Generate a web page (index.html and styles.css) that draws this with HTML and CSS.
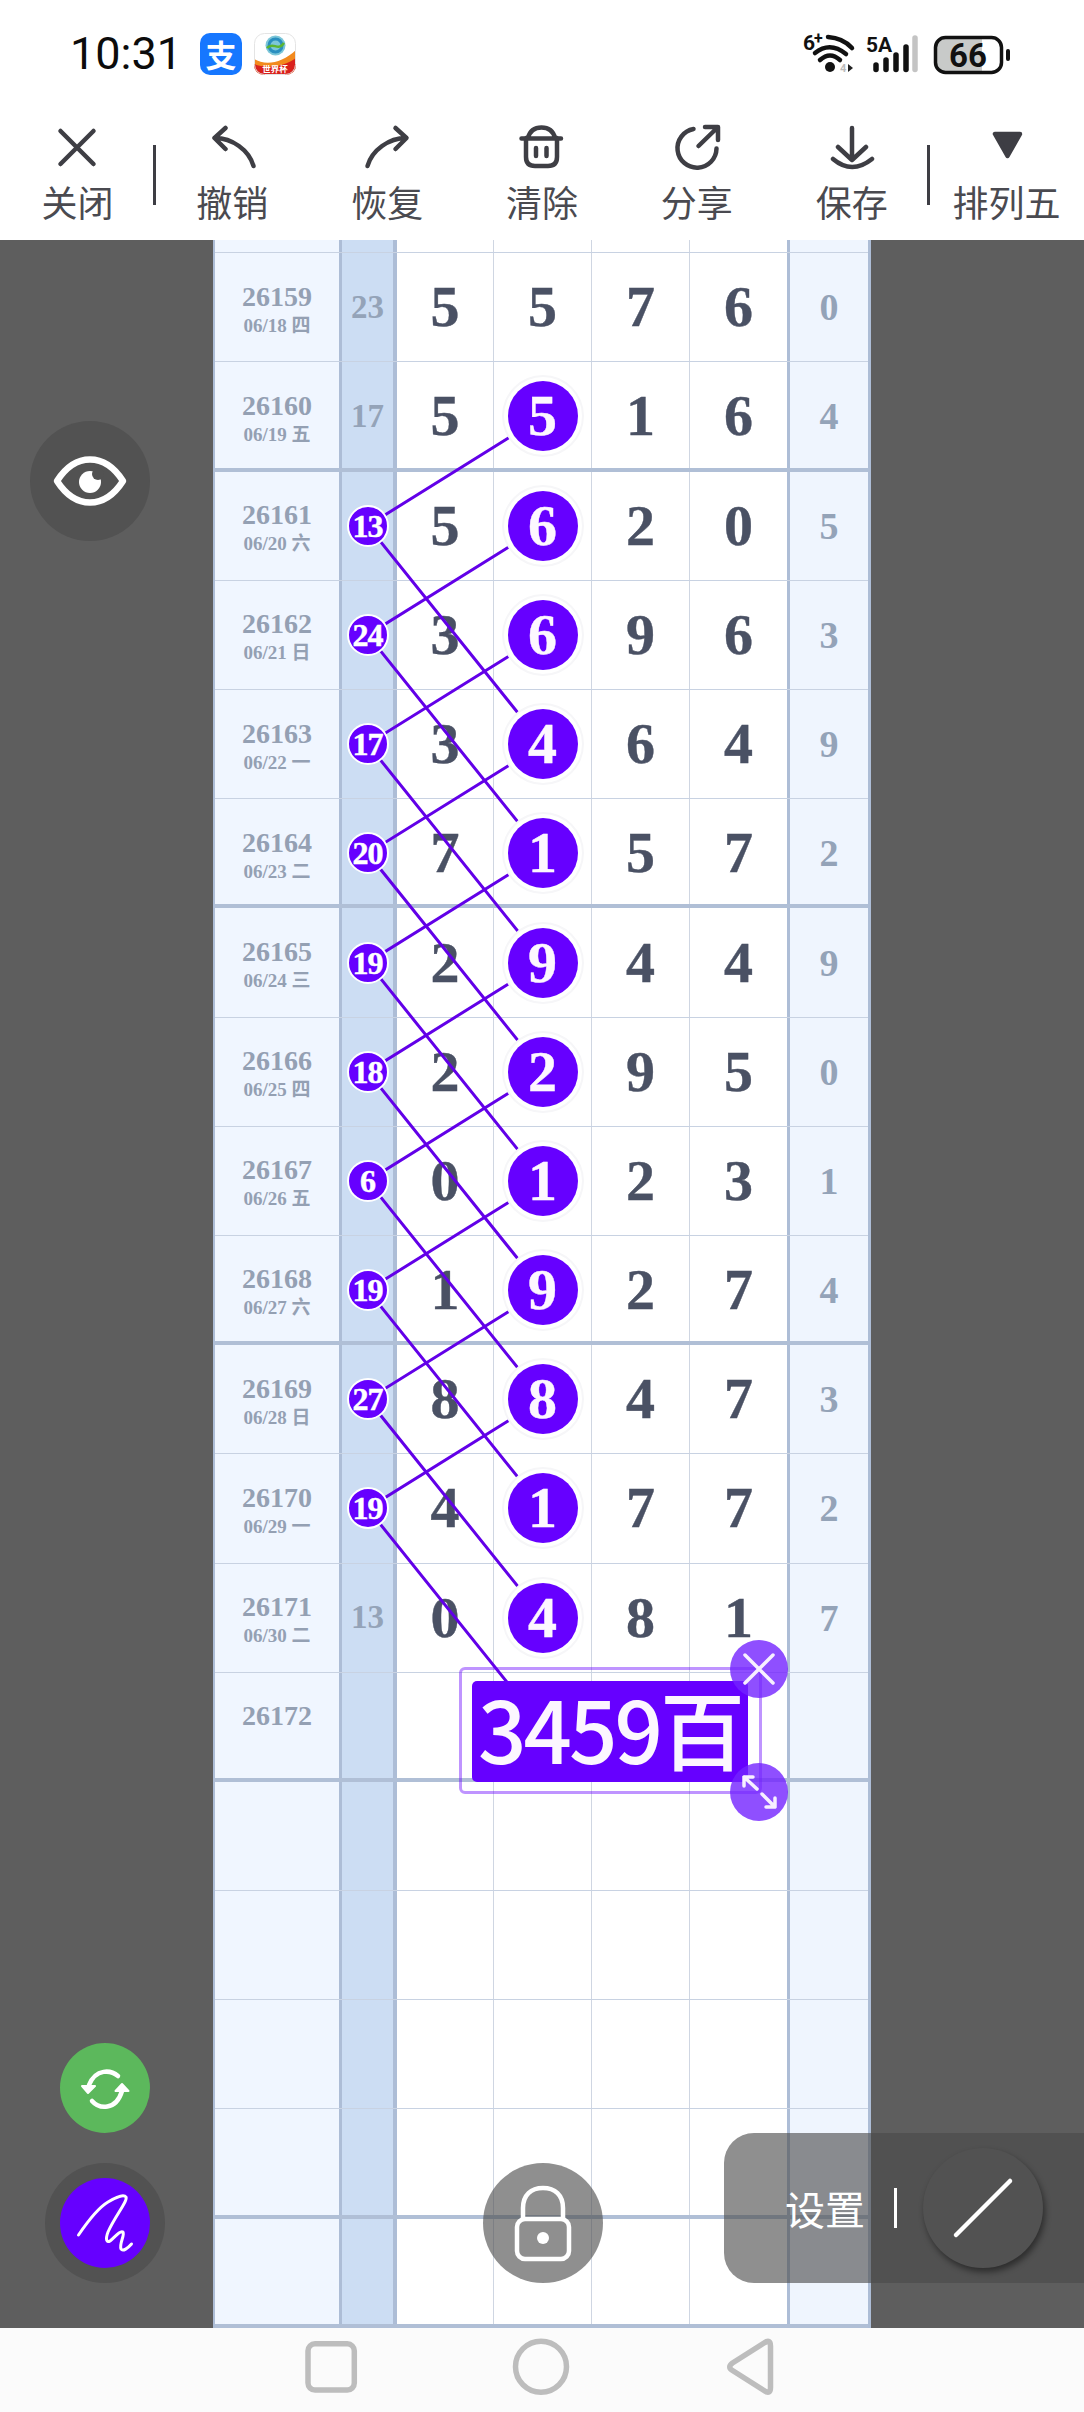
FILE: index.html
```html
<!DOCTYPE html>
<html lang="zh-CN">
<head>
    <meta charset="UTF-8">
    <meta name="viewport" content="width=device-width, initial-scale=1.0">
    <title>排列五 走势图</title>
    <link rel="stylesheet" href="styles.css">
</head>
<body>
    <div class="status-bar">
        <span class="time">10:31</span>
        <span class="app-icon alipay">支</span>
        <svg class="app-icon" viewBox="0 0 42 42">
            <defs><clipPath id="roundIcon"><rect width="42" height="42" rx="10"/></clipPath></defs>
            <g clip-path="url(#roundIcon)">
                <rect width="42" height="42" fill="#fff"/>
                <path d="M0 26 C12 33 28 30 42 17 V42 H0 Z" fill="#f28a1e"/>
                <path d="M0 31 C12 36 30 34 42 25 V42 H0 Z" fill="#d9211c"/>
                <circle cx="21.5" cy="12.5" r="10" fill="#7cc6d8"/>
                <circle cx="21.5" cy="12.5" r="6.5" fill="none" stroke="#2a8fc0" stroke-width="3"/>
                <path d="M13 15 C19 8 24 19 30 10" fill="none" stroke="#5cb531" stroke-width="2.5"/>
                <text class="cup-text" x="21" y="39">世界杯</text>
            </g>
            <rect x="0.5" y="0.5" width="41" height="41" rx="10" fill="none" stroke="#e4e4e4"/>
        </svg>
        <svg class="status-icons" viewBox="800 29 212 50">
            <text class="net-text" x="803" y="50">6</text>
            <text class="net-plus" x="814" y="44">+</text>
            <circle cx="830" cy="67" r="5" fill="#111"/>
            <g class="wifi-arc">
                <path d="M820 60 Q830 51 840 60"/>
                <path d="M815 53 Q830 41 846 54"/>
                <path d="M828 37 Q843 38 852 48"/>
            </g>
            <text class="net-small" x="840" y="72">4</text>
            <path d="M848 64 V72 L853 68 Z" fill="#222"/>
            <text class="net-text" x="866" y="52">5A</text>
            <g class="bars">
                <path d="M876 65 V69.5"/>
                <path d="M886 60 V69.5"/>
                <path d="M896 55 V69.5"/>
                <path d="M906 47 V69.5"/>
                <path class="bar-off" d="M915 38 V69.5"/>
            </g>
            <path d="M946 37.5 H982 V72.5 H946 Q936 72.5 936 62 V48 Q936 37.5 946 37.5 Z" fill="#c8cac9"/>
            <rect x="935.5" y="37.5" width="66" height="35" rx="10" fill="none" stroke="#111" stroke-width="3.5"/>
            <text class="battery-text" x="968" y="67">66</text>
            <rect x="1006" y="49" width="4" height="12" rx="2" fill="#111"/>
        </svg>
    </div>

    <div class="toolbar">
        <div class="tool tool-split">
            <svg viewBox="0 0 48 48"><path d="M7.5 8 L40.5 41 M40.5 8 L7.5 41"/></svg>
            <span>关闭</span>
        </div>
        <div class="tool">
            <svg viewBox="0 0 48 48"><path d="M17.5 5 L6.5 15 L17.5 26 M7 15 C24 15 41 27 45.5 43"/></svg>
            <span>撤销</span>
        </div>
        <div class="tool">
            <svg viewBox="0 0 48 48"><path d="M32.5 5 L43.5 15 L32.5 26 M43 15 C26 15 9 27 4.5 43"/></svg>
            <span>恢复</span>
        </div>
        <div class="tool">
            <svg viewBox="0 0 48 48"><path d="M3.5 15.5 H43 M10 15 C12 7 17 4.5 23.5 4.5 C30 4.5 35 7 37 15 M8 15 V34 Q8 43 17 43 H30 Q39 43 39 34 V15 M18 25 V33 M28.5 25 V33"/></svg>
            <span>清除</span>
        </div>
        <div class="tool">
            <svg viewBox="0 0 48 48"><path d="M20.5 6 A19.5 19.5 0 1 0 43.5 25.5 M25.5 23 L44 5 M32 4 H45 V17"/></svg>
            <span>分享</span>
        </div>
        <div class="tool tool-split">
            <svg viewBox="0 0 48 48"><path d="M24 5 V37 M10 24 L24 37 L38 24 M5 36 Q24 52 44 36"/></svg>
            <span>保存</span>
        </div>
        <div class="tool">
            <svg viewBox="0 0 48 48"><path class="solid" d="M12 11 H37 L24.5 33 Z"/></svg>
            <span>排列五</span>
        </div>
    </div>

    <div class="stage">
        <div class="sheet">
            <div class="row row-top"><div class="c-num"></div><div class="c-sum"></div><div class="c-d"></div><div class="c-d"></div><div class="c-d"></div><div class="c-d"></div><div class="c-tail"></div></div>

            <div class="row"><div class="c-num"><b>26159</b><small>06/18 四</small></div><div class="c-sum">23</div><div class="c-d">5</div><div class="c-d">5</div><div class="c-d">7</div><div class="c-d">6</div><div class="c-tail">0</div></div>
            <div class="row row-major"><div class="c-num"><b>26160</b><small>06/19 五</small></div><div class="c-sum">17</div><div class="c-d">5</div><div class="c-d"><span class="ball">5</span></div><div class="c-d">1</div><div class="c-d">6</div><div class="c-tail">4</div></div>
            <div class="row"><div class="c-num"><b>26161</b><small>06/20 六</small></div><div class="c-sum"><span class="dot">13</span></div><div class="c-d">5</div><div class="c-d"><span class="ball">6</span></div><div class="c-d">2</div><div class="c-d">0</div><div class="c-tail">5</div></div>
            <div class="row"><div class="c-num"><b>26162</b><small>06/21 日</small></div><div class="c-sum"><span class="dot">24</span></div><div class="c-d">3</div><div class="c-d"><span class="ball">6</span></div><div class="c-d">9</div><div class="c-d">6</div><div class="c-tail">3</div></div>
            <div class="row"><div class="c-num"><b>26163</b><small>06/22 一</small></div><div class="c-sum"><span class="dot">17</span></div><div class="c-d">3</div><div class="c-d"><span class="ball">4</span></div><div class="c-d">6</div><div class="c-d">4</div><div class="c-tail">9</div></div>
            <div class="row row-major"><div class="c-num"><b>26164</b><small>06/23 二</small></div><div class="c-sum"><span class="dot">20</span></div><div class="c-d">7</div><div class="c-d"><span class="ball">1</span></div><div class="c-d">5</div><div class="c-d">7</div><div class="c-tail">2</div></div>
            <div class="row"><div class="c-num"><b>26165</b><small>06/24 三</small></div><div class="c-sum"><span class="dot">19</span></div><div class="c-d">2</div><div class="c-d"><span class="ball">9</span></div><div class="c-d">4</div><div class="c-d">4</div><div class="c-tail">9</div></div>
            <div class="row"><div class="c-num"><b>26166</b><small>06/25 四</small></div><div class="c-sum"><span class="dot">18</span></div><div class="c-d">2</div><div class="c-d"><span class="ball">2</span></div><div class="c-d">9</div><div class="c-d">5</div><div class="c-tail">0</div></div>
            <div class="row"><div class="c-num"><b>26167</b><small>06/26 五</small></div><div class="c-sum"><span class="dot">6</span></div><div class="c-d">0</div><div class="c-d"><span class="ball">1</span></div><div class="c-d">2</div><div class="c-d">3</div><div class="c-tail">1</div></div>
            <div class="row row-major"><div class="c-num"><b>26168</b><small>06/27 六</small></div><div class="c-sum"><span class="dot">19</span></div><div class="c-d">1</div><div class="c-d"><span class="ball">9</span></div><div class="c-d">2</div><div class="c-d">7</div><div class="c-tail">4</div></div>
            <div class="row"><div class="c-num"><b>26169</b><small>06/28 日</small></div><div class="c-sum"><span class="dot">27</span></div><div class="c-d">8</div><div class="c-d"><span class="ball">8</span></div><div class="c-d">4</div><div class="c-d">7</div><div class="c-tail">3</div></div>
            <div class="row"><div class="c-num"><b>26170</b><small>06/29 一</small></div><div class="c-sum"><span class="dot">19</span></div><div class="c-d">4</div><div class="c-d"><span class="ball">1</span></div><div class="c-d">7</div><div class="c-d">7</div><div class="c-tail">2</div></div>
            <div class="row"><div class="c-num"><b>26171</b><small>06/30 二</small></div><div class="c-sum">13</div><div class="c-d">0</div><div class="c-d"><span class="ball">4</span></div><div class="c-d">8</div><div class="c-d">1</div><div class="c-tail">7</div></div>
            <div class="row row-major"><div class="c-num"><b>26172</b><small>&nbsp;</small></div><div class="c-sum"></div><div class="c-d"></div><div class="c-d"></div><div class="c-d"></div><div class="c-d"></div><div class="c-tail"></div></div>

            <div class="row"><div class="c-num"></div><div class="c-sum"></div><div class="c-d"></div><div class="c-d"></div><div class="c-d"></div><div class="c-d"></div><div class="c-tail"></div></div>
            <div class="row"><div class="c-num"></div><div class="c-sum"></div><div class="c-d"></div><div class="c-d"></div><div class="c-d"></div><div class="c-d"></div><div class="c-tail"></div></div>
            <div class="row"><div class="c-num"></div><div class="c-sum"></div><div class="c-d"></div><div class="c-d"></div><div class="c-d"></div><div class="c-d"></div><div class="c-tail"></div></div>
            <div class="row row-major"><div class="c-num"></div><div class="c-sum"></div><div class="c-d"></div><div class="c-d"></div><div class="c-d"></div><div class="c-d"></div><div class="c-tail"></div></div>
            <div class="row row-major"><div class="c-num"></div><div class="c-sum"></div><div class="c-d"></div><div class="c-d"></div><div class="c-d"></div><div class="c-d"></div><div class="c-tail"></div></div>

            <!-- each sum links the digit one row above it and the digit two rows below it -->
            <svg class="links" viewBox="0 0 658 2088">
                <path d="M330 176.5 L154.7 285.7 L330 504.1"/>
                <path d="M330 285.7 L154.7 394.9 L330 613.3"/>
                <path d="M330 394.9 L154.7 504.1 L330 722.5"/>
                <path d="M330 504.1 L154.7 613.3 L330 831.7"/>
                <path d="M330 613.3 L154.7 722.5 L330 940.9"/>
                <path d="M330 722.5 L154.7 831.7 L330 1050.1"/>
                <path d="M330 831.7 L154.7 940.9 L330 1159.3"/>
                <path d="M330 940.9 L154.7 1050.1 L330 1268.5"/>
                <path d="M330 1050.1 L154.7 1159.3 L330 1377.7"/>
                <path d="M330 1159.3 L154.7 1268.5 L330 1486.9"/>
            </svg>

            <div class="note-frame">
                <div class="note">3459百</div>
                <span class="handle handle-close">
                    <svg viewBox="0 0 58 58"><path d="M15 15 L43 43 M43 15 L15 43"/></svg>
                </span>
                <span class="handle handle-size">
                    <svg viewBox="0 0 58 58"><path d="M14 14 L27 26 M14 14 V23 M14 14 H23 M32 31 L45 44 M45 44 V35 M45 44 H36"/></svg>
                </span>
            </div>
        </div>

        <div class="float-btn eye-btn">
            <svg viewBox="0 0 120 120">
                <path class="eye-line" d="M27 60 C36 46 47 38.5 60 38.5 C73 38.5 84 46 93 60 C84 74 73 81.5 60 81.5 C47 81.5 36 74 27 60 Z"/>
                <circle cx="60" cy="61" r="11" fill="#fff"/>
                <circle cx="68" cy="53" r="6" fill="#525252"/>
            </svg>
        </div>

        <div class="float-btn sync-btn">
            <svg viewBox="0 0 90 90">
                <path class="sync-line" d="M58 33 C51 27 36 25 29 42"/>
                <path class="sync-head" d="M22 43 H35 L28 50 Z"/>
                <path class="sync-line" d="M32 58 C39 66 56 68 62 48"/>
                <path class="sync-head" d="M55.5 48 H68.5 L62 41 Z"/>
            </svg>
        </div>

        <div class="float-btn pen-btn">
            <span class="pen-face">
                <svg viewBox="0 0 90 90"><path d="M18.5 57 C28 43 38 30 48 24 C56 19 64 16 66 19 C68 23 55 38 48 54 C45 62 47 65 50 63 C54 60 60 52 63 54 C65 57 59 66 61 71 C63 74 68 70 71.5 66"/></svg>
            </span>
        </div>

        <div class="float-btn lock-btn">
            <svg viewBox="0 0 120 120">
                <path class="lock-line" d="M40 56 V45 C40 32 48 25 60 25 C72 25 80 32 80 45 V56"/>
                <rect class="lock-line" x="34" y="56" width="52" height="40" rx="8"/>
                <circle cx="60" cy="75" r="6" fill="#fff"/>
            </svg>
        </div>

        <div class="settings">
            <span class="settings-text">设置</span>
            <span class="settings-sep"></span>
            <span class="line-tool">
                <svg viewBox="0 0 120 120"><path d="M33 87 L87 33"/></svg>
            </span>
        </div>
    </div>

    <div class="nav-bar">
        <svg viewBox="0 0 58 64"><rect x="5" y="8.8" width="46.3" height="46.2" rx="7"/></svg>
        <svg viewBox="0 0 58 64"><circle cx="29" cy="31.7" r="25.5"/></svg>
        <svg viewBox="0 0 58 64"><path d="M43 8 Q49.5 3.5 49.5 11 V52.5 Q49.5 60 43 55.5 L11.5 35.5 Q6 32 11.5 28 Z"/></svg>
    </div>
</body>
</html>
```

FILE: styles.css
```css
* {
    box-sizing: border-box;
    margin: 0;
    padding: 0;
}

body {
    width: 1084px;
    height: 2412px;
    display: flex;
    flex-direction: column;
    overflow: hidden;
    background-color: #fff;
    font-family: "Noto Sans CJK SC", "Noto Sans", sans-serif;
}

svg {
    display: block;
}

/* status bar */
.status-bar {
    height: 120px;
    display: flex;
    align-items: center;
    padding: 0 72px 13px 70px;
}

.time {
    font-family: Roboto, sans-serif;
    font-size: 45px;
    line-height: 1;
    color: #0c0c0c;
    margin-right: 18px;
}

.app-icon {
    width: 42px;
    height: 42px;
    margin-right: 12px;
}

.alipay {
    display: flex;
    align-items: center;
    justify-content: center;
    border-radius: 10px;
    background-color: #1677ff;
    color: #fff;
    font-size: 31px;
    font-weight: 700;
    line-height: 1;
}

.cup-text {
    font-size: 8.5px;
    font-weight: 700;
    fill: #fff;
    text-anchor: middle;
}

.status-icons {
    width: 212px;
    height: 50px;
    margin-left: auto;
}

.net-text {
    font-family: Roboto, sans-serif;
    font-size: 21px;
    font-weight: 700;
    fill: #111;
}

.net-plus {
    font-family: Roboto, sans-serif;
    font-size: 16px;
    font-weight: 700;
    fill: #111;
}

.net-small {
    font-family: Roboto, sans-serif;
    font-size: 11px;
    font-weight: 700;
    fill: #bbb;
}

.wifi-arc path {
    fill: none;
    stroke: #111;
    stroke-width: 4.5;
    stroke-linecap: round;
}

.bars path {
    fill: none;
    stroke: #111;
    stroke-width: 5.5;
    stroke-linecap: round;
}

.bars .bar-off {
    stroke: #c4c4c4;
}

.battery-text {
    font-family: Roboto, sans-serif;
    font-size: 33px;
    font-weight: 700;
    fill: #111;
    text-anchor: middle;
}

/* toolbar */
.toolbar {
    height: 120px;
    display: grid;
    grid-template-columns: repeat(7, 1fr);
    background-color: #fff;
}

.tool {
    position: relative;
    display: flex;
    flex-direction: column;
    align-items: center;
    padding-top: 3px;
    color: #4a4a50;
    font-size: 36px;
    font-weight: 400;
    line-height: 38px;
}

.tool svg {
    width: 48px;
    height: 48px;
    margin-bottom: 11px;
}

.tool path {
    fill: none;
    stroke: #3e3e44;
    stroke-width: 4.5;
    stroke-linecap: round;
    stroke-linejoin: round;
}

.tool path.solid {
    fill: #3e3e44;
}

.tool-split::after {
    content: "";
    position: absolute;
    top: 25px;
    right: -1px;
    width: 3px;
    height: 60px;
    background-color: #3e3e44;
}

/* work area */
.stage {
    position: relative;
    flex: 1;
    overflow: hidden;
    background-color: #5e5e5e;
}

.sheet {
    position: relative;
    width: 658px;
    margin-left: 213px;
    border-left: 2px solid #adbdd6;
    border-right: 3px solid #adbdd6;
    font-family: "Liberation Serif", "Noto Sans CJK SC", serif;
    font-weight: 700;
}

.row {
    height: 109.2px;
    display: grid;
    grid-template-columns: 127px 55px 97px 98px 98px 100px 78px;
    border-bottom: 1.5px solid #c8d2e2;
}

.row-top {
    height: 13.3px;
}

.row-major {
    border-bottom: 4px solid #b0bfd6;
}

.row > div {
    display: flex;
    align-items: center;
    justify-content: center;
}

/* the padding keeps the cell centres in line with the thin-ruled rows */
.row-major > div {
    padding-top: 2.5px;
}

.c-num {
    flex-direction: column;
    padding-top: 3px;
    background-color: #f0f6ff;
    border-right: 3px solid #adbdd6;
    color: #94a0b3;
}

.row-major > .c-num {
    padding-top: 5.5px;
}

.c-num b {
    font-size: 28px;
    line-height: 34px;
}

.c-num small {
    font-size: 19px;
    line-height: 24px;
}

.c-sum {
    background-color: #ccddf3;
    border-right: 4px solid #adbdd6;
    color: #94a3b8;
    font-size: 33px;
}

.c-d {
    border-right: 1.5px solid #cfd6e2;
    background-color: #fff;
    color: #4a5164;
    font-size: 58px;
    line-height: 1;
    -webkit-text-stroke: 0.4px currentColor;
}

.c-d:nth-child(6) {
    border-right: 3px solid #adbdd6;
}

.c-tail {
    background-color: #eff5fe;
    color: #94a3b8;
    font-size: 38px;
}

.ball {
    position: relative;
    z-index: 2;
    width: 70px;
    height: 70px;
    display: flex;
    align-items: center;
    justify-content: center;
    border-radius: 50%;
    background-color: #6600ff;
    color: #fdf7ff;
    box-shadow: 0 0 0 4px #fff, 0 0 0 6px #f6f6f8;
}

.dot {
    position: relative;
    z-index: 2;
    width: 42px;
    height: 42px;
    display: flex;
    align-items: center;
    justify-content: center;
    border: 2px solid #fff;
    border-radius: 50%;
    background-color: #6600ff;
    color: #fff;
    font-size: 32px;
    letter-spacing: -1px;
    line-height: 1;
    -webkit-text-stroke: 0.5px currentColor;
}

.links {
    position: absolute;
    left: -2px;
    top: 0;
    z-index: 1;
    width: 658px;
    height: 2088px;
}

.links path {
    fill: none;
    stroke: #6200e8;
    stroke-width: 3px;
}

/* the text sticker and its handles */
.note-frame {
    position: absolute;
    left: 244px;
    top: 1427px;
    z-index: 3;
    width: 303px;
    height: 127px;
    padding: 11px 11px 0 10px;
    border: 3px solid rgba(102, 0, 255, 0.42);
    border-radius: 6px;
}

.note {
    height: 101px;
    border-radius: 5px;
    background-color: #6600ff;
    color: #fcf6ff;
    font-family: "Noto Sans CJK SC", sans-serif;
    font-size: 85px;
    font-weight: 500;
    letter-spacing: -3px;
    line-height: 92px;
    text-align: center;
    white-space: nowrap;
}

.handle {
    position: absolute;
    right: -29px;
    width: 58px;
    height: 58px;
    border-radius: 50%;
    background-color: rgba(115, 35, 255, 0.8);
}

.handle-close {
    top: -30px;
}

.handle-size {
    bottom: -30px;
}

.handle path {
    fill: none;
    stroke: #f7f0ff;
    stroke-width: 3.5;
    stroke-linecap: round;
}

/* floating buttons */
.float-btn {
    position: absolute;
    display: flex;
    align-items: center;
    justify-content: center;
    border-radius: 50%;
}

.eye-btn {
    left: 30px;
    top: 181px;
    width: 120px;
    height: 120px;
    background-color: #525252;
}

.eye-line {
    fill: none;
    stroke: #fff;
    stroke-width: 6.5;
    stroke-linejoin: round;
}

.sync-btn {
    left: 60px;
    top: 1803px;
    width: 90px;
    height: 90px;
    background-color: #5cb85c;
}

.sync-btn svg {
    width: 90px;
    height: 90px;
}

.sync-line {
    fill: none;
    stroke: #fff;
    stroke-width: 4.5;
    stroke-linecap: round;
}

.sync-head {
    fill: #fff;
    stroke: #fff;
    stroke-width: 2;
    stroke-linejoin: round;
}

.pen-btn {
    left: 45px;
    top: 1923px;
    width: 120px;
    height: 120px;
    background-color: #525252;
}

.pen-face {
    width: 90px;
    height: 90px;
    border-radius: 50%;
    background-color: #6600ff;
}

.pen-face path {
    fill: none;
    stroke: #fff;
    stroke-width: 3;
    stroke-linecap: round;
    stroke-linejoin: round;
}

.lock-btn {
    left: 483px;
    top: 1923px;
    width: 120px;
    height: 120px;
    background-color: rgba(74, 74, 74, 0.62);
}

.lock-line {
    fill: none;
    stroke: #fff;
    stroke-width: 4.5;
}

.settings {
    position: absolute;
    left: 724px;
    right: 0;
    top: 1893px;
    height: 150px;
    display: flex;
    align-items: center;
    padding-left: 61px;
    border-radius: 30px 0 0 30px;
    background-color: rgba(74, 74, 74, 0.62);
}

.settings-text {
    color: #fff;
    font-size: 40px;
    font-weight: 400;
    line-height: 1;
}

.settings-sep {
    width: 3px;
    height: 40px;
    margin: 0 26px 0 29px;
    background-color: #fff;
}

.line-tool {
    width: 120px;
    height: 120px;
    border-radius: 50%;
    background-color: #525252;
    box-shadow: 2px 4px 6px rgba(0, 0, 0, 0.45);
}

.line-tool path {
    fill: none;
    stroke: #fff;
    stroke-width: 4.5;
    stroke-linecap: round;
}

/* system navigation */
.nav-bar {
    height: 84px;
    display: flex;
    justify-content: center;
    gap: 151px;
    padding: 7px 3px 13px 0;
    background-color: #fbfbfb;
}

.nav-bar svg {
    width: 58px;
    height: 64px;
}

.nav-bar rect,
.nav-bar circle,
.nav-bar path {
    fill: none;
    stroke: #bdbdbd;
    stroke-width: 5.5;
    stroke-linejoin: round;
}
```
